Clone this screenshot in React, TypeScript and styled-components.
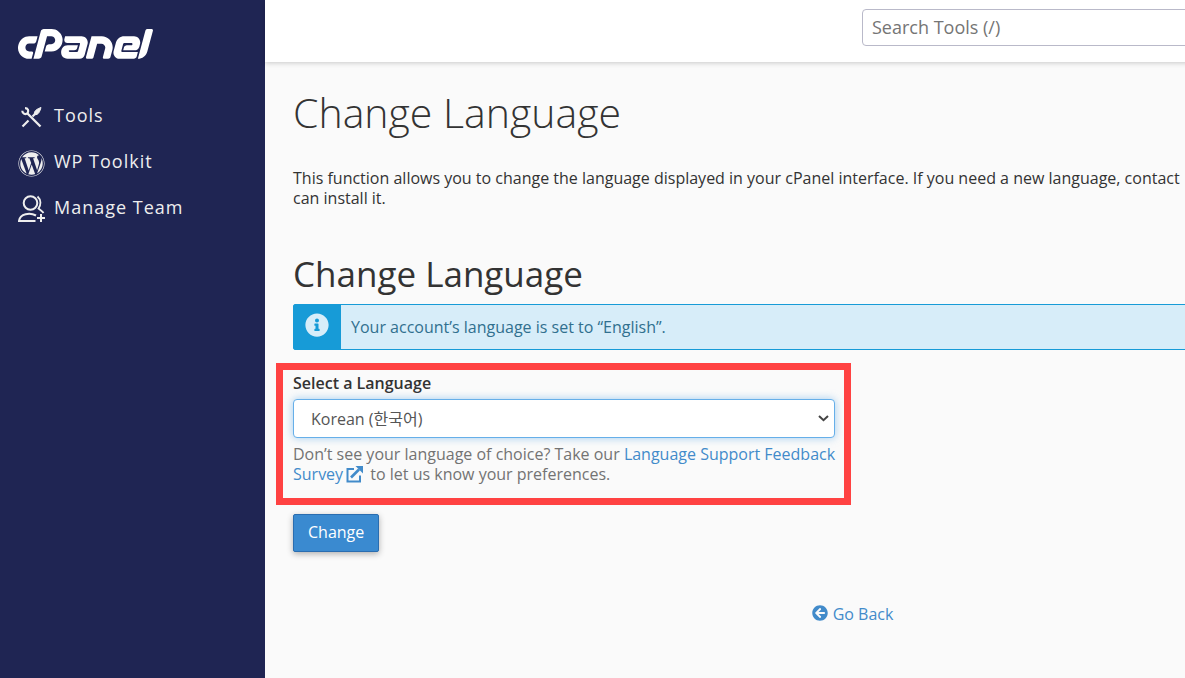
import React from "react";
import styled, { createGlobalStyle, css } from "styled-components";
import { FaCpanel, FaWordpress, FaInfoCircle, FaArrowCircleLeft } from "react-icons/fa";

const GlobalStyle = createGlobalStyle`
  *, *::before, *::after { box-sizing: border-box; }
  html, body { margin: 0; background: #fafafa; }
  body {
    overflow-x: hidden;
    font-family: "Open Sans", "Noto Sans CJK KR", sans-serif;
    font-size: 16px;
    line-height: 20px;
    color: #333;
  }
`;

const Page = styled.div`
  display: flex;
  min-width: 1440px;
  min-height: 100vh;
`;

const Sidebar = styled.aside`
  flex: 0 0 265px;
  background: #1f2553;
  color: #eeeeee;
`;

const LogoLink = styled.a`
  display: block;
  height: 92px;
  padding: 29px 18px 0;
  color: #fff;
  svg { display: block; width: 135px; height: 30px; }
`;

const Nav = styled.nav`
  display: flex;
  flex-direction: column;
`;

const NavLink = styled.a`
  display: flex;
  align-items: center;
  gap: 9px;
  height: 46px;
  padding: 0 18px;
  color: inherit;
  font-size: 18px;
  line-height: 24px;
  letter-spacing: 1px;
  text-decoration: none;
  svg { flex: none; margin-top: 4px; }
`;

const Main = styled.div`
  flex: 1;
  display: flex;
  flex-direction: column;
`;

const Header = styled.header`
  display: flex;
  justify-content: flex-end;
  height: 62px;
  padding: 9px 28px;
  background: #fff;
  box-shadow: 0 1px 5px rgba(0, 0, 0, 0.2);
`;

const SearchInput = styled.input`
  width: 550px;
  height: 37px;
  padding: 0 9px 2px;
  border: 1px solid #b9b9c9;
  border-radius: 4px;
  background: #fff;
  font: inherit;
  font-size: 18px;
  &::placeholder { color: #757575; opacity: 1; }
`;

const Content = styled.main`
  padding: 22px 28px;
`;

const PageTitle = styled.h1`
  margin: 0;
  font-size: 41px;
  font-weight: 300;
  line-height: 56px;
`;

const Intro = styled.p`
  margin: 28px 0 42px;
`;

const SectionTitle = styled.h2`
  margin: 0;
  font-size: 35px;
  font-weight: 400;
  line-height: 48px;
`;

const Alert = styled.div`
  display: flex;
  margin-top: 6px;
  height: 46px;
  border: 1px solid #179bd7;
  border-radius: 2px;
  background: #d7edf9;
  color: #31708f;
`;

const AlertIcon = styled.span`
  flex: 0 0 47px;
  display: flex;
  justify-content: center;
  padding: 8px 2px 0 0;
  background: #179bd7;
  color: #d7edf9;
`;

const AlertText = styled.span`
  padding: 12px 10px;
`;

const Field = styled.div`
  position: relative;
  width: 542px;
  margin-top: 23px;
`;

const Highlight = styled.div`
  position: absolute;
  inset: -10px -16px -21px -17px;
  border: 7px solid #ff4242;
  pointer-events: none;
`;

const Label = styled.label`
  display: block;
  font-weight: 600;
`;

const SelectWrap = styled.div`
  position: relative;
  margin: 6px 0;
  svg { position: absolute; right: 6px; top: 15px; pointer-events: none; }
`;

const Select = styled.select`
  display: block;
  appearance: none;
  width: 100%;
  height: 39px;
  padding: 0 17px;
  border: 1px solid #66afe9;
  border-radius: 4px;
  background: #fff;
  box-shadow: 0 0 8px rgba(102, 175, 233, 0.6);
  color: #555;
  font: inherit;
  font-family: "Open Sans", "Noto Sans CJK KR", sans-serif;
`;

const Hint = styled.p`
  margin: 0 -8px 0 0;
  color: #737373;
`;

const linkColor = css`
  color: #428bca;
  text-decoration: none;
`;

const TextLink = styled.a`
  ${linkColor}
  svg { margin: 0 3px; vertical-align: -3px; }
`;

const Button = styled.button`
  display: block;
  height: 38px;
  margin-top: 30px;
  padding: 0 14px 2px;
  border: 1px solid #2a6db0;
  border-radius: 2px;
  background: #3a8ad0;
  box-shadow: 0 2px 6px rgba(0, 0, 0, 0.3);
  color: #fff;
  font: inherit;
`;

const BackRow = styled.div`
  display: flex;
  justify-content: center;
  margin-top: 52px;
`;

const BackLink = styled.a`
  ${linkColor}
  display: flex;
  gap: 5px;
  svg { margin-top: 1px; }
`;

const ToolsIcon = () => (
  <svg width="27" height="27" viewBox="0 0 27 27" fill="none" stroke="currentColor" aria-hidden="true">
    <path d="M9 9 22.500 22.500" strokeWidth="2.300" />
    <path d="M4.500 22.500 10.500 16.500M14.500 12.500 17.500 9.500" strokeWidth="2.200" />
    <path d="M16.500 10.500C15.500 7 19 5 23 3.500C22 7 20.500 11.500 16.500 10.500Z" fill="currentColor" strokeWidth="1" />
    <path d="M7 4.200C10 4.200 11 6.500 9.600 9.200C7.500 11 4.300 9.700 4.300 6.800" strokeWidth="2.200" />
  </svg>
);

const TeamIcon = () => (
  <svg width="27" height="28" viewBox="0 0 27 28" fill="none" stroke="currentColor" strokeWidth="2" aria-hidden="true">
    <circle cx="12.500" cy="8" r="6.800" />
    <path d="M19.500 1.500C23.500 5 23 10 20.500 13.500C22.500 15 24.500 16.500 25.500 18" strokeWidth="1.800" />
    <path d="M18 20.500C12 17.500 2 18.500 1 26H17.500" />
    <path d="M23 19V27M19 23H27" />
  </svg>
);

const ExternalIcon = () => (
  <svg width="17" height="17" viewBox="0 0 17 17" fill="none" stroke="currentColor" strokeWidth="2" role="img" aria-label="opens in a new tab">
    <path d="M8 3H1.500V15.500H14V9.500" />
    <path d="M5 11.500 13 3.500" strokeWidth="2.600" />
    <path d="M9.500 0H17V7.500Z" fill="currentColor" stroke="none" />
  </svg>
);

const ChevronIcon = () => (
  <svg width="11" height="9" viewBox="0 0 11 9" fill="none" stroke="#444" strokeWidth="2" aria-hidden="true">
    <path d="M1 2 5.500 6.200 10 2" />
  </svg>
);

export default function App() {
  return (
    <>
      <GlobalStyle />
      <Page>
        <Sidebar>
          <LogoLink href="#home" aria-label="cPanel">
            <FaCpanel viewBox="0 179 640 142" />
          </LogoLink>
          <Nav>
            <NavLink href="#tools"><ToolsIcon />Tools</NavLink>
            <NavLink href="#wp"><FaWordpress size={27} />WP Toolkit</NavLink>
            <NavLink href="#team"><TeamIcon />Manage Team</NavLink>
          </Nav>
        </Sidebar>
        <Main>
          <Header>
            <SearchInput type="search" placeholder="Search Tools (/)" aria-label="Search Tools" />
          </Header>
          <Content>
            <PageTitle>Change Language</PageTitle>
            <Intro>
              This function allows you to change the language displayed in your cPanel interface. If you need a new language, contact
              <br />
              can install it.
            </Intro>
            <SectionTitle>Change Language</SectionTitle>
            <Alert role="status">
              <AlertIcon><FaInfoCircle size={24} /></AlertIcon>
              <AlertText>Your account’s language is set to “English”.</AlertText>
            </Alert>
            <form onSubmit={(e) => e.preventDefault()}>
              <Field>
                <Highlight />
                <Label htmlFor="language">Select a Language</Label>
                <SelectWrap>
                  <Select id="language" defaultValue="ko">
                    <option value="ko">Korean (한국어)</option>
                  </Select>
                  <ChevronIcon />
                </SelectWrap>
                <Hint>
                  Don’t see your language of choice? Take our{" "}
                  <TextLink href="#survey">Language Support Feedback Survey<ExternalIcon /></TextLink>{" "}
                  to let us know your preferences.
                </Hint>
              </Field>
              <Button type="submit">Change</Button>
            </form>
            <BackRow>
              <BackLink href="#back"><FaArrowCircleLeft size={16} />Go Back</BackLink>
            </BackRow>
          </Content>
        </Main>
      </Page>
    </>
  );
}
